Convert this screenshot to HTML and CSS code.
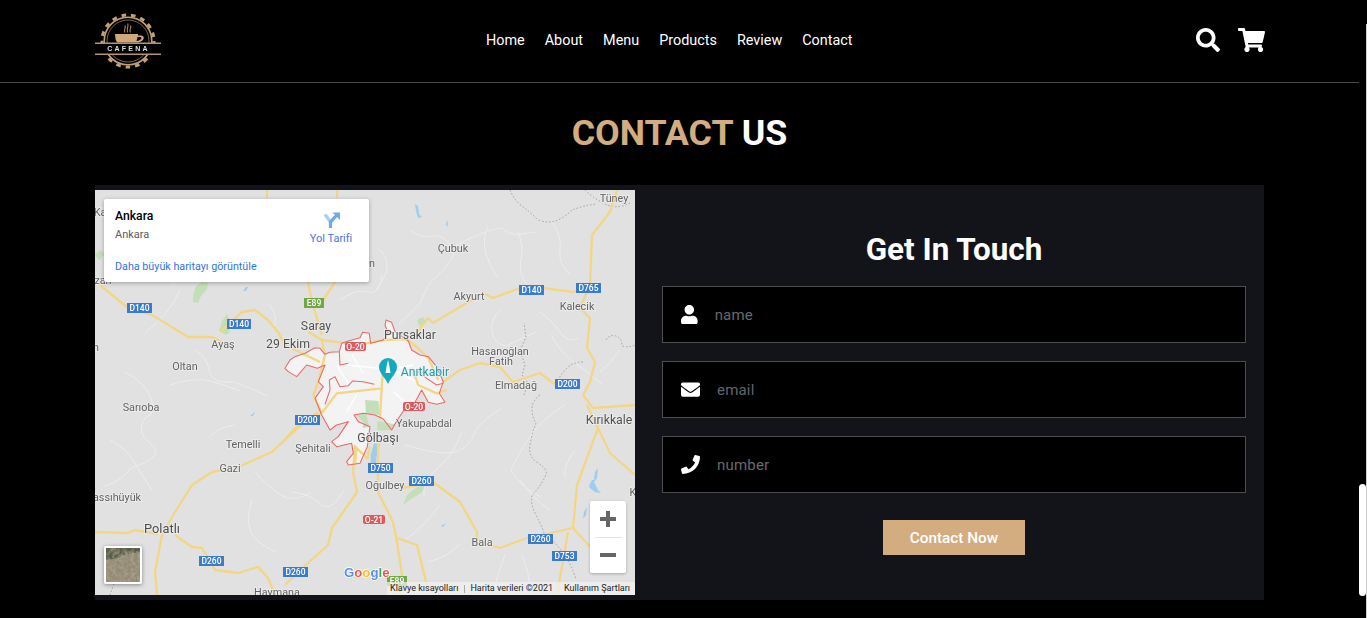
FILE: index.html
```html
<!DOCTYPE html>
<html lang="tr">
<head>
<meta charset="utf-8">
<title>Cafena - Contact</title>
<link rel="stylesheet" href="styles.css">
</head>
<body>
<div class="app">
  <div class="page">
    <header class="header">
      <a class="logo" href="#" aria-label="Cafena">
        <svg class="logo-svg" viewBox="95 10 66 60">
          <circle class="gear" cx="128" cy="40" r="26" stroke-dasharray="4.6 5"/>
          <circle class="gear-body" cx="128" cy="40" r="23.800"/>
          <circle class="gear-ring" cx="128" cy="40" r="21"/>
          <path class="cup" d="M115 33h23v1.500h2c3 0 4.500 1.500 3.500 3.500-.8 1.800-3 3.200-5.500 3.500h-21l-1.500-3.500zM137.500 36l-1 4c2.500-.3 4.500-1.500 5-2.800.3-1-1.500-1.400-4-1.200z"/>
          <path class="steam" d="M125 31.500c-2-3 1.500-4 0-7M127.700 31.500c-2-4 1.500-5 0-9M130.500 31.500c-2-3 1.500-4 0-7"/>
          <rect class="logo-band" x="95" y="43" width="66" height="10"/>
          <rect class="logo-line" x="95" y="41.500" width="66" height="1.500"/>
          <rect class="logo-line" x="95" y="52.500" width="66" height="1.500"/>
          <text class="logo-text" x="128.500" y="50.300">CAFENA</text>
        </svg>
      </a>
      <nav class="nav">
        <a href="#">Home</a>
        <a href="#">About</a>
        <a href="#">Menu</a>
        <a href="#">Products</a>
        <a href="#">Review</a>
        <a href="#">Contact</a>
      </nav>
      <div class="header-icons">
        <svg class="icon-search" viewBox="0 0 512 512"><path d="M505 442.7L405.3 343c-4.5-4.5-10.6-7-17-7H372c27.6-35.3 44-79.7 44-128C416 93.1 322.9 0 208 0S0 93.1 0 208s93.1 208 208 208c48.3 0 92.7-16.4 128-44v16.3c0 6.4 2.5 12.5 7 17l99.7 99.7c9.4 9.4 24.6 9.4 33.9 0l28.3-28.3c9.4-9.4 9.4-24.6.1-34zM208 336c-70.7 0-128-57.2-128-128 0-70.7 57.2-128 128-128 70.7 0 128 57.2 128 128 0 70.7-57.2 128-128 128z"/></svg>
        <svg class="icon-cart" viewBox="0 0 576 512"><path d="M528.12 301.319l47.273-208C578.806 78.301 567.391 64 551.99 64H159.208l-9.166-44.81C147.758 8.021 137.93 0 126.529 0H24C10.745 0 0 10.745 0 24v16c0 13.255 10.745 24 24 24h69.883l70.248 343.435C147.325 417.1 136 435.222 136 456c0 30.928 25.072 56 56 56s56-25.072 56-56c0-15.674-6.447-29.835-16.824-40h209.647C430.447 426.165 424 440.326 424 456c0 30.928 25.072 56 56 56s56-25.072 56-56c0-22.172-12.888-41.332-31.579-50.405l5.517-24.276c3.413-15.018-8.002-29.319-23.403-29.319H218.117l-6.545-32h293.145c11.206 0 20.92-7.754 23.403-18.681z"/></svg>
      </div>
    </header>

    <section class="contact">
      <h1 class="title"><span class="accent">CONTACT</span> US</h1>
      <div class="row">
        <div class="map">
          <svg class="map-svg" viewBox="95 190 540 405">
            <rect class="land" x="95" y="190" width="540" height="405"/>
            <!-- parks and water -->
            <path class="park" d="M193 296l3-10 6-4 6 1-1 6-6 7-3 7-5-1zM219 331l3-10 5-7 3 6-3 6 3 6-4 3zM403 505l4-10 10-8 10-2-6 8-10 6zM95 255l5-5 5 4-6 6zM417 320l6-3 3 5-7 4z"/>
            <path class="water" d="M415 204l3 2 1 8 3 3-4 1-2-7zM447 220l1 4-1 3-1-3zM243 291l3-4 2 0-2 4zM250 416l5-4-2 4zM589 486l3-6 2 0 1-8 3-4-1 10-3 4 4 8 3 3-6-1-5-4zM584 512l3-5-1 8-3 4zM441 526l5-3-3 4z"/>
            <!-- minor roads -->
            <g class="minor">
              <path d="M410 230q10 8 22 6t20 12q12-8 28-14t22-6q8 8 20 6t14-2M488 226q-6 14-2 28t12 24M518 232q6 14 3 28t7 26M552 222q10 14 8 28t10 24M455 252q-8 16-18 24t-16 26q-8 10-22 22M380 250q10 10 6 22t-10 18M500 310q-10 10-8 22t14 14q12-6 30-14M540 312q12 8 20 20t18 6M340 300q16-12 28-8t14-18M270 305q8 12 4 22M195 350q12 6 14 20t24 12q14 4 34 14M125 372q20 10 26 26t-6 20q-10 14 6 26t-20 24q-8 12-26 18M170 385q24-8 40-4t30 10M235 425q-16 2-26 12M110 440q16 8 24 22t18 28M255 472q10 12 24 22t32-2M252 500q-6 18-2 30t26 22M292 492q18 2 28 12t24-14M405 445q26 8 44 8t28-24q8-12 24-20M462 432q-8 22-24 36t-14 28M440 505q-14 20-34 34M565 405q-24 14-38 36t-16 30q12 18 30 26M520 480q10 16 30 30M603 385q-14-12-28-22t-24-28M428 562q22-6 32-18M505 555q-8 18-12 40M522 555q8 18 8 40M125 262q24 6 50 22M180 290q-10 24-34 42M575 450q-12 16-10 28M620 350q-10 14-20 22"/>
            </g>
            <!-- province borders -->
            <g class="border">
              <path d="M510 190q4 10 12 16t16 14q12 4 20 0t14-10q10-4 24-6M585 190q8 8 20 14t25-1M524 395l4-12-6-8 3-10-5-14 6-14-2-14M540 395q-8 6-8 14t4 14q-4 10-6 22t8 18 8 12q-6 12-12 18t2 22 8 18q10 8 18 18t14 28M606 340q4-6 10-4t6 10q6 2 13-1M583 362q-10 0-16 6t-10 14M110 595q4-12 10-30"/>
            </g>
            <!-- Ankara boundary fill -->
            <g transform="translate(280 315) scale(.3333)">
              <path class="city-fill" d="M15 160L30 135L45 125L75 115L105 98L120 100L135 118L150 112L178 110L185 85L205 78L240 68L248 52L268 55L272 85L310 75L325 55L315 30L318 15L335 22L345 50L362 62L385 78L395 105L420 120L445 125L470 155L490 200L478 235L495 262L470 268L445 262L425 225L405 262L372 285L350 318L335 345L310 312L285 300L250 295L222 300L235 320L270 335L262 395L240 445L205 450L200 440L220 415L215 385L170 395L155 380L175 365L205 320L170 330L150 345L125 300L105 250L130 215L115 200L135 150L112 160L80 150L50 185L25 170Z"/>
              <path class="park" d="M255 255L295 258L300 300L262 296L228 300L250 320L248 340L268 335L258 295zM292 318L345 328L335 345L292 346zM420 165L440 172L420 185z"/>
              <path class="water" d="M282 385L300 388L290 425L286 462L272 462L272 420z"/>
              <path class="city-white" d="M200 150Q250 155 300 160T400 150M230 240L200 290M340 230L380 265M350 170L420 205M170 150L205 205M215 120L250 175"/>
            </g>
            <!-- main roads -->
            <g class="road">
              <path d="M100 285L128 308L152 315L188 337L212 337L222 342"/>
              <path d="M220 332L242 312L255 310L268 320L278 332L285 345L320 362"/>
              <path d="M308 282L312 302L322 335"/>
              <path d="M335 282L322 302M267 190L267 198M337 190L337 198"/>
              <path d="M415 335L428 318L433 323L460 307L483 293L493 298L520 288L543 288L573 292L590 285L592 235L610 212L617 190"/>
              <path d="M590 285L580 308L590 318L587 348L595 362L590 382L583 395"/>
              <path d="M443 382L460 370L480 363L500 367L513 382L540 373L553 383L580 385"/>
              <path d="M95 532L128 533L135 530L158 534"/>
              <path d="M162 535L175 512L192 485L212 472L238 467L272 452L298 428L318 412"/>
              <path d="M162 535L155 572L157 595"/>
              <path d="M175 535L192 547L202 548L215 570L238 573L258 567L268 578L275 595"/>
              <path d="M285 585L308 563L328 545L332 528L353 498L357 492L353 472L355 445"/>
              <path d="M378 442L378 492L393 522L397 542L402 575L400 595"/>
              <path d="M397 538L417 545L428 590"/>
              <path d="M403 488L433 482L460 502L477 532L477 542L500 548L527 538L573 528"/>
              <path d="M573 528L577 485L598 428L587 405"/>
              <path d="M598 428L610 453L635 475"/>
              <path d="M573 528L593 550M568 532L557 595"/>
              <path d="M583 395L593 408L635 405"/>
            </g>
            <g class="road-city" transform="translate(280 315) scale(.3333)">
              <path d="M85 50L125 75L135 120L115 200L100 240L125 295"/>
              <path d="M125 295L170 235L305 220L310 150"/>
              <path d="M125 75L200 85L260 85L310 75L380 72L420 105L445 130L475 195"/>
              <path d="M305 220L300 310"/>
              <path d="M400 170L415 210L470 235L500 225"/>
              <path d="M230 395L225 445M270 395L262 430L225 395"/>
              <path d="M0 390L50 335L125 295"/>
            </g>
            <!-- Ankara boundary -->
            <g class="city-line" transform="translate(280 315) scale(.3333)">
              <path d="M15 160L30 135L45 125L75 115L105 98L120 100L135 118L150 112L178 110L185 85L205 78L240 68L248 52L268 55L272 85L310 75L325 55L315 30L318 15L335 22L345 50L362 62L385 78L395 105L420 120L445 125L470 155L490 200L478 235L495 262L470 268L445 262L425 225L405 262L372 285L350 318L335 345L310 312L285 300L250 295L222 300L235 320L270 335L262 395L240 445L205 450L200 440L220 415L215 385L170 395L155 380L175 365L205 320L170 330L150 345L125 300L105 250L130 215L115 200L135 150L112 160L80 150L50 185L25 170Z"/>
              <path d="M135 268L150 225L148 195L165 185L180 215L205 212L218 198L250 200L283 208M178 110L180 150L205 145M415 170L440 190L470 210L490 205"/>
            </g>
            <!-- pin -->
            <path class="pin" d="M388 358a9 9 0 0 1 9 9c0 6-6 10-9 17-3-7-9-11-9-17a9 9 0 0 1 9-9z"/>
            <path class="pin-mark" d="M385.500 373l1.500-9 1-4 1 4 1.500 9z"/>
            <!-- labels -->
            <g class="labels">
              <text x="614" y="202">Tüney</text>
              <text x="453" y="252">Çubuk</text>
              <text x="469" y="300">Akyurt</text>
              <text x="577" y="310">Kalecik</text>
              <text class="big" x="410" y="339">Pursaklar</text>
              <text x="500" y="355">Hasanoğlan</text>
              <text x="501" y="365">Fatih</text>
              <text x="516" y="389">Elmadağ</text>
              <text class="big" x="316" y="330">Saray</text>
              <text class="big" x="288" y="348">29 Ekim</text>
              <text x="223" y="348">Ayaş</text>
              <text x="185" y="370">Oltan</text>
              <text x="141" y="411">Sarıoba</text>
              <text x="243" y="448">Temelli</text>
              <text x="313" y="452">Şehitali</text>
              <text class="big" x="378" y="442">Gölbaşı</text>
              <text x="424" y="427">Yakupabdal</text>
              <text class="big" x="609" y="424">Kırıkkale</text>
              <text x="230" y="472">Gazi</text>
              <text x="117" y="501">assıhüyük</text>
              <text class="large" x="162" y="533">Polatlı</text>
              <text x="385" y="489">Oğulbey</text>
              <text x="482" y="546">Bala</text>
              <text x="277" y="596">Haymana</text>
              <text x="633" y="496">K</text>
              <text x="103" y="284">zan</text>
              <text x="372" y="267">n</text>
              <text x="96" y="351">n</text>
              <text x="100" y="216">Ka</text>
              <text class="teal" x="425" y="376">Anıtkabir</text>
            </g>
            <!-- shields -->
            <g class="shield-blue">
              <rect x="127" y="303" width="25" height="10"/><rect x="227" y="319" width="24" height="10"/><rect x="519" y="285" width="25" height="10"/><rect x="576" y="283" width="25" height="10"/><rect x="555" y="379" width="25" height="10"/><rect x="295" y="415" width="25" height="10"/><rect x="199" y="556" width="25" height="10"/><rect x="283" y="567" width="25" height="10"/><rect x="368" y="463" width="25" height="10"/><rect x="409" y="476" width="25" height="10"/><rect x="528" y="534" width="25" height="10"/><rect x="552" y="551" width="25" height="10"/>
            </g>
            <g class="shield-green"><rect x="304" y="298" width="20" height="10"/><rect x="387" y="576" width="20" height="10"/></g>
            <g class="shield-red"><rect x="345" y="342" width="21" height="9" rx="2"/><rect x="403" y="402" width="22" height="9" rx="2"/><rect x="363" y="515" width="22" height="9" rx="2"/></g>
            <g class="shield-text">
              <text x="139.500" y="311">D140</text><text x="239" y="327">D140</text><text x="531.500" y="293">D140</text><text x="588.500" y="291">D765</text><text x="567.500" y="387">D200</text><text x="307.500" y="423">D200</text><text x="211.500" y="564">D260</text><text x="295.500" y="575">D260</text><text x="380.500" y="471">D750</text><text x="421.500" y="484">D260</text><text x="540.500" y="542">D260</text><text x="564.500" y="559">D753</text><text x="314" y="306">E89</text><text x="397" y="584">E89</text><text x="355.500" y="349.500">O-20</text><text x="414" y="409.500">O-20</text><text x="374" y="522.500">O-21</text>
            </g>
            <text class="google" x="344" y="577"><tspan class="g-blue">G</tspan><tspan class="g-red">o</tspan><tspan class="g-yellow">o</tspan><tspan class="g-blue">g</tspan><tspan class="g-green">l</tspan><tspan class="g-red">e</tspan></text>
          </svg>

          <div class="info-card">
            <div class="info-main">
              <div class="info-text">
                <div class="info-name">Ankara</div>
                <div class="info-addr">Ankara</div>
              </div>
              <div class="directions">
                <svg class="dir-icon" viewBox="0 0 17 17">
                  <path class="dir-left" d="M7.500 11L2 3.500"/>
                  <path class="dir-right" d="M7.500 17V11L13.500 4.500"/>
                  <path class="dir-head" d="M9.500 1.500H17V9z"/>
                </svg>
                <span>Yol Tarifi</span>
              </div>
            </div>
            <a class="info-link" href="#">Daha büyük haritayı görüntüle</a>
          </div>

          <div class="sat-thumb">
            <svg class="sat-svg" viewBox="0 0 34 34">
              <filter id="sat-noise" x="0" y="0" width="100%" height="100%">
                <feTurbulence type="fractalNoise" baseFrequency=".28" numOctaves="3" seed="4"/>
                <feColorMatrix type="matrix" values="0 0 0 0 .42  0 0 0 0 .39  0 0 0 0 .30  0 0 0 1.600 -.55"/>
              </filter>
              <rect class="sat-base" width="34" height="34"/>
              <path class="sat-top" d="M0 0h34v4l-14 2-8 4-12 2z"/>
              <rect width="34" height="34" filter="url(#sat-noise)"/>
            </svg>
          </div>

          <div class="zoom-ctl">
            <button class="zoom-btn" aria-label="Yakınlaştır"><span class="plus"></span></button>
            <span class="zoom-sep"></span>
            <button class="zoom-btn" aria-label="Uzaklaştır"><span class="minus"></span></button>
          </div>

          <div class="attribution">
            <span>Klavye kısayolları</span>
            <span class="attr-sep"></span>
            <span>Harita verileri ©2021</span>
            <span class="attr-terms">Kullanım Şartları</span>
          </div>
        </div>

        <form class="form">
          <h2 class="form-title">Get In Touch</h2>
          <div class="fields">
            <label class="field">
              <svg class="field-icon" viewBox="0 0 448 512"><path d="M224 256c70.700 0 128-57.300 128-128S294.700 0 224 0 96 57.300 96 128s57.300 128 128 128zm89.600 32h-16.700c-22.200 10.200-46.900 16-72.900 16s-50.600-5.800-72.900-16h-16.700C60.200 288 0 348.200 0 422.400V464c0 26.500 21.500 48 48 48h352c26.500 0 48-21.500 48-48v-41.600c0-74.200-60.200-134.400-134.400-134.400z"/></svg>
              <input class="input" type="text" placeholder="name">
            </label>
            <label class="field">
              <svg class="field-icon" viewBox="0 0 512 512"><path d="M502.300 190.800c3.900-3.100 9.700-.2 9.700 4.700V400c0 26.500-21.500 48-48 48H48c-26.500 0-48-21.500-48-48V195.600c0-5 5.700-7.800 9.700-4.700 22.400 17.400 52.100 39.500 154.100 113.600 21.100 15.400 56.700 47.800 92.200 47.600 35.700.3 72-32.800 92.300-47.600 102-74.100 131.600-96.300 154-113.700zM256 320c23.200.4 56.600-29.200 73.400-41.400 132.700-96.300 142.800-104.700 173.400-128.700 5.800-4.500 9.200-11.500 9.200-18.900v-19c0-26.500-21.500-48-48-48H48C21.500 64 0 85.500 0 112v19c0 7.400 3.400 14.300 9.200 18.900 30.600 23.900 40.700 32.400 173.400 128.700 16.800 12.200 50.200 41.800 73.400 41.400z"/></svg>
              <input class="input input-slate" type="email" placeholder="email">
            </label>
            <label class="field">
              <svg class="field-icon" viewBox="0 0 512 512"><path d="M493.400 24.600l-104-24c-11.300-2.600-22.900 3.300-27.500 13.900l-48 112c-4.200 9.800-1.400 21.300 6.900 28l60.600 49.600c-36 76.700-98.900 140.500-177.200 177.200l-49.600-60.600c-6.800-8.300-18.200-11.100-28-6.900l-112 48C3.900 366.500-2 378.100.6 389.400l24 104C27.100 504.200 36.700 512 48 512c256.100 0 464-207.500 464-464 0-11.200-7.700-20.900-18.600-23.400z"/></svg>
              <input class="input" type="text" placeholder="number">
            </label>
          </div>
          <button class="submit" type="button">Contact Now</button>
        </form>
      </div>
    </section>
  </div>
  <div class="scrollbar">
    <div class="scroll-lane"><div class="scroll-thumb"></div></div>
    <div class="scroll-edge"></div>
  </div>
</div>
</body>
</html>
```

FILE: styles.css
```css
* { box-sizing: border-box; }
html, body { margin: 0; height: 100%; overflow: hidden; background: #000; }
body { font-family: Roboto, "Liberation Sans", sans-serif; color: #fff; }
a { color: inherit; text-decoration: none; }

.app { display: flex; height: 618px; }
.page { width: 1359px; flex: none; }

/* scrollbar */
.scrollbar { display: flex; width: 8px; flex: none; }
.scroll-lane { width: 7px; padding-top: 484px; }
.scroll-thumb { height: 112px; background: #fff; border-radius: 4px; }
.scroll-edge { width: 1px; margin-top: 24px; background: #cfcfcf; }

/* header */
.header {
  display: grid;
  grid-template-columns: 391px auto 1fr;
  align-items: center;
  height: 83px;
  padding: 0 94px 0 95px;
  border-bottom: 1px solid #4a4a4a;
}
.logo { display: flex; }
.logo-svg { width: 66px; height: 60px; filter: blur(.35px); }
.gear { fill: none; stroke: #c4a077; stroke-width: 3; }
.gear-body { fill: none; stroke: #c4a077; stroke-width: 1.600; }
.gear-ring { fill: #000; stroke: #7a6650; stroke-width: 1; }
.cup { fill: #cfa97c; }
.steam { fill: none; stroke: #a88a66; stroke-width: 1.100; }
.logo-band { fill: #000; }
.logo-line { fill: #b4946e; }
.logo-text { font-family: "Liberation Sans", sans-serif; font-size: 7px; font-weight: 700; letter-spacing: 2.200px; fill: #dedede; text-anchor: middle; }

.nav { display: flex; gap: 20px; font-size: 14.400px; font-weight: 400; line-height: 20px; }
.header-icons { display: flex; justify-content: flex-end; align-items: center; gap: 18px; margin-top: -3px; }
.icon-search { width: 24px; height: 24px; fill: #fff; }
.icon-cart { width: 27px; height: 24px; fill: #fff; }

/* section */
.contact { padding: 0 95px; }
.title {
  margin: 0;
  padding: 30px 0 32px;
  font-size: 35.800px;
  line-height: 40px;
  font-weight: 700;
  text-align: center;
  color: #fff;
}
.accent { color: #d3ad7f; }
.row { display: flex; height: 415px; background: #13141a; }

/* map */
.map { position: relative; width: 540px; height: 405px; margin: 5px 0; flex: none; overflow: hidden; }
.map-svg { display: block; width: 540px; height: 405px; filter: blur(.4px); }
.land { fill: #e1e1e1; }
.park { fill: #c4dfb8; }
.water { fill: #9fcdf0; }
.minor path { fill: none; stroke: #ededed; stroke-width: 1; }
.border path { fill: none; stroke: #a0a0a0; stroke-width: 1; stroke-dasharray: 1.500 2; }
.road path { fill: none; stroke: #f3d685; stroke-width: 2.300; stroke-linejoin: round; }
.road-city path { fill: none; stroke: #f3d685; stroke-width: 7; stroke-linejoin: round; }
.city-fill { fill: #f3f3f3; }
.city-white { fill: none; stroke: #fff; stroke-width: 4; }
.city-line path { fill: none; stroke: #ea6a66; stroke-width: 3.200; stroke-linejoin: round; }
.pin { fill: #15a9bf; }
.pin-mark { fill: #fff; }
.labels text {
  font-family: Roboto, sans-serif;
  font-size: 10.800px;
  fill: #606060;
  stroke: #efefef;
  stroke-width: 1.500px;
  paint-order: stroke;
  text-anchor: middle;
}
.labels .big { font-size: 12.300px; fill: #505050; }
.labels .large { font-size: 12.800px; fill: #4a4a4a; }
.labels .teal { font-size: 12.200px; fill: #199fb0; }
.shield-blue rect { fill: #3a7bcb; }
.shield-green rect { fill: #70a845; }
.shield-red rect { fill: #dc5a5c; }
.shield-text text {
  font-family: Roboto, sans-serif;
  font-size: 8.500px;
  font-weight: 500;
  fill: #fff;
  text-anchor: middle;
}
.google { font-family: "Liberation Sans", sans-serif; font-size: 13.200px; font-weight: 700; stroke: #fff; stroke-width: 1.500px; paint-order: stroke; }
.g-blue { fill: #5a8ff0; }
.g-red { fill: #ea5a50; }
.g-yellow { fill: #f5c02c; }
.g-green { fill: #43a856; }

/* map overlays */
.info-card {
  position: absolute;
  left: 9px;
  top: 9px;
  width: 265px;
  height: 83px;
  padding: 10px 11px 9px;
  display: flex;
  flex-direction: column;
  background: #fff;
  border-radius: 2px;
  box-shadow: 0 1px 4px rgba(0, 0, 0, .3);
  color: #5b5b5b;
}
.info-main { display: flex; justify-content: space-between; flex: 1; }
.info-name { font-size: 12.200px; font-weight: 500; line-height: 15px; color: #000; }
.info-addr { font-size: 11px; line-height: 14px; margin-top: 4px; }
.directions { display: flex; flex-direction: column; align-items: center; width: 50px; margin: 2px 2px 0 0; font-size: 11px; line-height: 14px; color: #3f78e0; }
.dir-icon { width: 17px; height: 17px; margin-bottom: 4px; }
.dir-left { fill: none; stroke: #a9cdf6; stroke-width: 3.200; }
.dir-right { fill: none; stroke: #6fa8ef; stroke-width: 3.200; }
.dir-head { fill: #6fa8ef; }
.info-link { font-size: 10.750px; line-height: 14px; margin-bottom: -1px; color: #2f74e6; }

.sat-thumb {
  position: absolute;
  left: 9px;
  top: 356px;
  width: 38px;
  height: 38px;
  border: 2px solid #fff;
  border-radius: 2px;
  box-shadow: 0 1px 4px rgba(0, 0, 0, .4);
}
.sat-svg { display: block; width: 34px; height: 34px; }
.sat-base { fill: #948a74; }
.sat-top { fill: #5a5f48; }

.zoom-ctl {
  position: absolute;
  left: 495px;
  top: 311px;
  width: 36px;
  height: 72px;
  display: flex;
  flex-direction: column;
  align-items: center;
  background: #fff;
  border-radius: 2px;
  box-shadow: 0 1px 3px rgba(0, 0, 0, .25);
}
.zoom-btn { display: flex; align-items: center; justify-content: center; width: 36px; height: 35.500px; padding: 0; border: 0; background: none; }
.zoom-sep { width: 27px; height: 1px; background: #e3e3e3; }
.plus, .minus { position: relative; display: block; width: 16px; height: 4px; background: #666; }
.plus::after { content: ""; position: absolute; left: 6px; top: -6px; width: 4px; height: 16px; background: #666; }

.attribution {
  position: absolute;
  left: 292px;
  right: 0;
  bottom: 0;
  height: 13px;
  display: flex;
  align-items: center;
  padding: 0 5px 0 3px;
  background: rgba(240, 240, 240, .75);
  font-size: 9px;
  line-height: 13px;
  color: #222;
  white-space: nowrap;
}
.attr-sep { width: 1px; height: 8px; margin: 0 5.500px; background: #aaa; }
.attr-terms { margin-left: auto; }

/* form */
.form { flex: 1; display: flex; flex-direction: column; align-items: center; padding: 47px 18px 0 27px; }
.form-title { margin: 0 0 18px; font-size: 31.400px; line-height: 36px; font-weight: 700; color: #fff; text-align: center; }
.fields { display: flex; flex-direction: column; gap: 18px; width: 100%; margin-bottom: 27px; }
.field { display: flex; align-items: center; gap: 17px; height: 57px; padding-left: 18px; background: #000; border: 1px solid #4d4d4d; }
.field-icon { height: 19px; flex: none; fill: #fff; }
.input { flex: 1; min-width: 0; height: 100%; padding: 0; border: 0; outline: 0; background: none; font: 400 15px Roboto, sans-serif; letter-spacing: .2px; color: #fff; }
.input::placeholder { color: #69696d; opacity: 1; }
.input-slate::placeholder { color: #5f676e; }
.submit { width: 142px; height: 35px; padding: 0; border: 0; background: #d3ad7f; color: #fff; font: 500 15.300px Roboto, sans-serif; }
```
